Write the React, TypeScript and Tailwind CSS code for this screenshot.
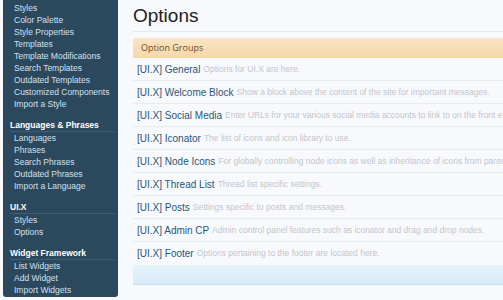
import React from "react";

const groups: { title: string | null; items: string[] }[] = [
  {
    title: null,
    items: [
      "Styles",
      "Color Palette",
      "Style Properties",
      "Templates",
      "Template Modifications",
      "Search Templates",
      "Outdated Templates",
      "Customized Components",
      "Import a Style",
    ],
  },
  {
    title: "Languages & Phrases",
    items: ["Languages", "Phrases", "Search Phrases", "Outdated Phrases", "Import a Language"],
  },
  { title: "UI.X", items: ["Styles", "Options"] },
  { title: "Widget Framework", items: ["List Widgets", "Add Widget", "Import Widgets"] },
];

const rows: [string, string][] = [
  ["[UI.X] General", "Options for UI.X are here."],
  ["[UI.X] Welcome Block", "Show a block above the content of the site for important messages."],
  ["[UI.X] Social Media", "Enter URLs for your various social media accounts to link to on the front end."],
  ["[UI.X] Iconator", "The list of icons and icon library to use."],
  ["[UI.X] Node Icons", "For globally controlling node icons as well as inheritance of icons from parent nodes."],
  ["[UI.X] Thread List", "Thread list specific settings."],
  ["[UI.X] Posts", "Settings specific to posts and messages."],
  ["[UI.X] Admin CP", "Admin control panel features such as iconator and drag and drop nodes."],
  ["[UI.X] Footer", "Options pertaining to the footer are located here."],
];

export default function App() {
  return (
    <div
      className="w-[503px] h-[300px] overflow-hidden bg-[#f8f9fd] flex"
      style={{ fontFamily: '"Liberation Sans", Arial, sans-serif' }}
    >
      <div className="w-[118px] shrink-0 pl-[3px] pb-[3px]">
        <div className="h-full bg-[#2c485d] rounded-b-[3px] pt-[2px] pl-[7px] pr-[3px] overflow-hidden whitespace-nowrap">
          {groups.map((g, gi) => (
            <div key={gi} className={gi === 0 ? "" : "mt-[9px]"}>
              {g.title && (
                <div className="text-white font-bold text-[8.5px] leading-[12px] border-b border-[#3d5d74]">
                  {g.title}
                </div>
              )}
              {g.items.map((it) => (
                <div key={it} className="pl-[4px] text-[#cfe0ef] text-[8.5px] leading-[12px]">
                  {it}
                </div>
              ))}
            </div>
          ))}
        </div>
      </div>
      <div className="flex-1 pl-[15px] pt-[3px] min-w-0">
        <div className="text-[19px] leading-[26px] text-[#222222] border-b border-[#e4e9f0] pb-[2px] mr-[-20px]">
          Options
        </div>
        <div
          className="mt-[6px] h-[20px] bg-gradient-to-b from-[#fbe5c3] to-[#f6d7a8] flex items-center pl-[8px] text-[9px] text-[#6a4b28] mr-[-20px] rounded-tl-[2px]"
          style={{ fontFamily: '"Open Sans", sans-serif' }}
        >
          Option Groups
        </div>
        {rows.map(([t, d], i) => (
          <div
            key={t}
            className={
              "h-[23px] flex items-center pl-[4px] whitespace-nowrap overflow-hidden mr-[-20px] " +
              (i < rows.length - 1 ? "border-b border-[#e6ebf1]" : "")
            }
          >
            <span className="text-[10px] text-[#285676]">{t}</span>
            <span className="ml-[3px] text-[8.5px] text-[#c2c6cc]">{d}</span>
          </div>
        ))}
        <div className="h-[20px] bg-gradient-to-b from-[#e6f3fb] to-[#d6ebf8] border-b border-[#c9dfee] mr-[-20px]" />
      </div>
    </div>
  );
}
